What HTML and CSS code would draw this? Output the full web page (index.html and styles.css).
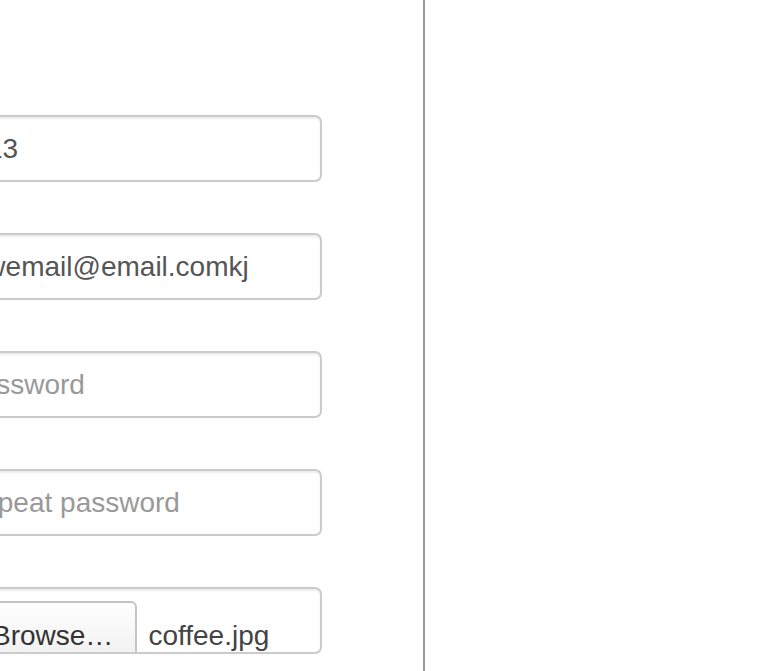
FILE: index.html
```html
<!DOCTYPE html>
<html lang="en">
<head>
<meta charset="utf-8">
<title>Sign up</title>
<link rel="stylesheet" href="styles.css">
</head>
<body>
<div class="page">
  <div class="panel">
    <form class="form">
      <input class="control" type="text" value="ra13">
      <input class="control" type="email" value="tewemail@email.comkj">
      <input class="control" type="password" placeholder="Password">
      <input class="control" type="password" placeholder="Repeat password">
      <div class="control file">
        <span class="browse">Browse…</span>
        <span class="fname">coffee.jpg</span>
      </div>
    </form>
  </div>
  <div class="side"></div>
</div>
</body>
</html>
```
FILE: styles.css
```css
html, body {
  margin: 0;
  padding: 0;
  background: #fff;
  overflow: hidden;
}

body {
  font-family: "Liberation Sans", Arial, sans-serif;
}

.page {
  display: flex;
  height: 671px;
}

.panel {
  width: 423px;
  border-right: 2px solid #999;
  flex: none;
}

.side {
  flex: 1;
}

.form {
  display: flex;
  flex-direction: column;
  gap: 51px;
  padding: 115px 101px 0 0;
  margin-left: -64px;
}

.control {
  display: block;
  box-sizing: border-box;
  width: 100%;
  height: 67px;
  margin: 0;
  padding: 0 24px;
  border: 2px solid #cbcbcb;
  border-radius: 7px;
  box-shadow: inset 0 2px 2px rgba(0, 0, 0, 0.075);
  background: #fff;
  font-family: "Liberation Sans", Arial, sans-serif;
  font-size: 28px;
  line-height: 32px;
  color: #555;
  outline: none;
  -webkit-appearance: none;
  appearance: none;
}

.control::placeholder {
  color: #999;
}

.file {
  display: flex;
  align-items: flex-start;
  padding: 12px 0 0 24px;
  overflow: hidden;
}

.browse {
  flex: none;
  border: 2px solid #c4c4c4;
  border-radius: 6px;
  padding: 17px 22px 20px 28px;
  background: linear-gradient(#ffffff, #ececec);
  color: #333;
  line-height: 32px;
}

.fname {
  margin-left: 11px;
  padding-top: 19px;
  color: #444;
  line-height: 32px;
}
```
